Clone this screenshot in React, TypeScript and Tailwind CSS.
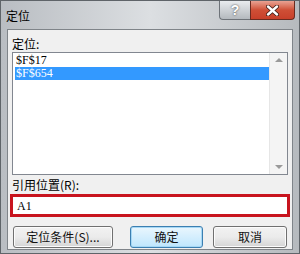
import React from 'react';

const cjk = { fontFamily: '"Noto Sans CJK SC", "Liberation Sans", sans-serif' };
const serif = { fontFamily: '"Liberation Serif", "DejaVu Serif", serif' };

function DlgButton({ label, focused, className }: { label: string; focused?: boolean; className: string }) {
  return (
    <button
      className={`h-[22px] rounded-[3px] border text-[12px] leading-none text-[#111] ${className} ${
        focused
          ? 'border-[#3c7fb1] bg-gradient-to-b from-[#eaf6fd] to-[#bee6fd] shadow-[inset_0_0_0_1px_#a6d8f5]'
          : 'border-[#707070] bg-gradient-to-b from-[#f2f2f2] via-[#ebebeb] to-[#d5d5d5] shadow-[inset_0_0_0_1px_#fcfcfc]'
      }`}
      style={cjk}
    >
      {label}
    </button>
  );
}

export default function App() {
  return (
    <div className="w-[300px] h-[254px] overflow-hidden flex flex-col bg-gradient-to-r from-[#b9bdc2] via-[#dcdfe2] to-[#b6babe] border border-[#5f6469]">
      {/* Title bar */}
      <div className="h-[28px] flex items-start justify-between pl-[5px] pr-[4px]">
        <span className="mt-[8px] text-[12px] leading-[13px] text-black" style={cjk}>
          定位
        </span>
        <div className="flex">
          <div className="w-[31px] h-[19px] rounded-bl-[4px] border border-[#6e7379] border-t-0 border-r-0 bg-gradient-to-b from-[#e9ecef] to-[#b4b9be] flex items-center justify-center text-white font-bold text-[14px] [text-shadow:0_0_2px_#333]" style={{ fontFamily: '"Liberation Sans", sans-serif' }}>
            ?
          </div>
          <div className="w-[45px] h-[19px] rounded-br-[4px] border border-[#6a2b20] border-t-0 bg-gradient-to-b from-[#e8a293] via-[#cf4f36] to-[#c8402a] flex items-center justify-center">
            <svg width="13" height="11" viewBox="0 0 13 11">
              <path d="M2 1.5 L11 9.5 M11 1.5 L2 9.5" stroke="#3a1a14" strokeWidth="4" strokeLinecap="round" />
              <path d="M2 1.5 L11 9.5 M11 1.5 L2 9.5" stroke="#fff" strokeWidth="2.4" strokeLinecap="round" />
            </svg>
          </div>
        </div>
      </div>

      {/* Client area */}
      <div className="mx-[6px] h-[221px] border border-[#7f8489] bg-[#f0f0f0] px-[4px] pt-[7px] flex flex-col">
        <div className="text-[12px] leading-[14px] text-black" style={cjk}>
          定位:
        </div>
        <div className="mt-[1px] h-[123px] border border-[#828790] bg-white flex">
          <div className="flex-1 pt-[1px] pl-[2px] text-[12px] leading-[13px]" style={serif}>
            <div className="h-[13px] pl-[1px] text-black">$F$17</div>
            <div className="h-[13px] pl-[1px] bg-[#3399ff] text-white">$F$654</div>
          </div>
          <div className="w-[18px] bg-[#f4f4f4] border-l border-[#e6e6e6] flex flex-col items-center justify-between py-[5px]">
            <svg width="8" height="4" viewBox="0 0 8 4">
              <path d="M0 4 L4 0 L8 4 Z" fill="#9a9a9a" />
            </svg>
            <svg width="8" height="4" viewBox="0 0 8 4">
              <path d="M0 0 L4 4 L8 0 Z" fill="#9a9a9a" />
            </svg>
          </div>
        </div>
        <div className="mt-[3px] text-[12px] leading-[14px] text-black" style={cjk}>
          引用位置(R):
        </div>
        <div className="mt-[2px] -mx-[2px] h-[23px] border-[3px] border-[#c8141e] bg-white flex items-center pl-[4px] text-[12px]" style={serif}>
          A1
        </div>
        <div className="mt-[9px] flex pl-[1px]">
          <DlgButton label="定位条件(S)..." className="w-[100px]" />
          <DlgButton label="确定" focused className="w-[73px] ml-[17px]" />
          <DlgButton label="取消" className="w-[74px] ml-[10px]" />
        </div>
      </div>
    </div>
  );
}
